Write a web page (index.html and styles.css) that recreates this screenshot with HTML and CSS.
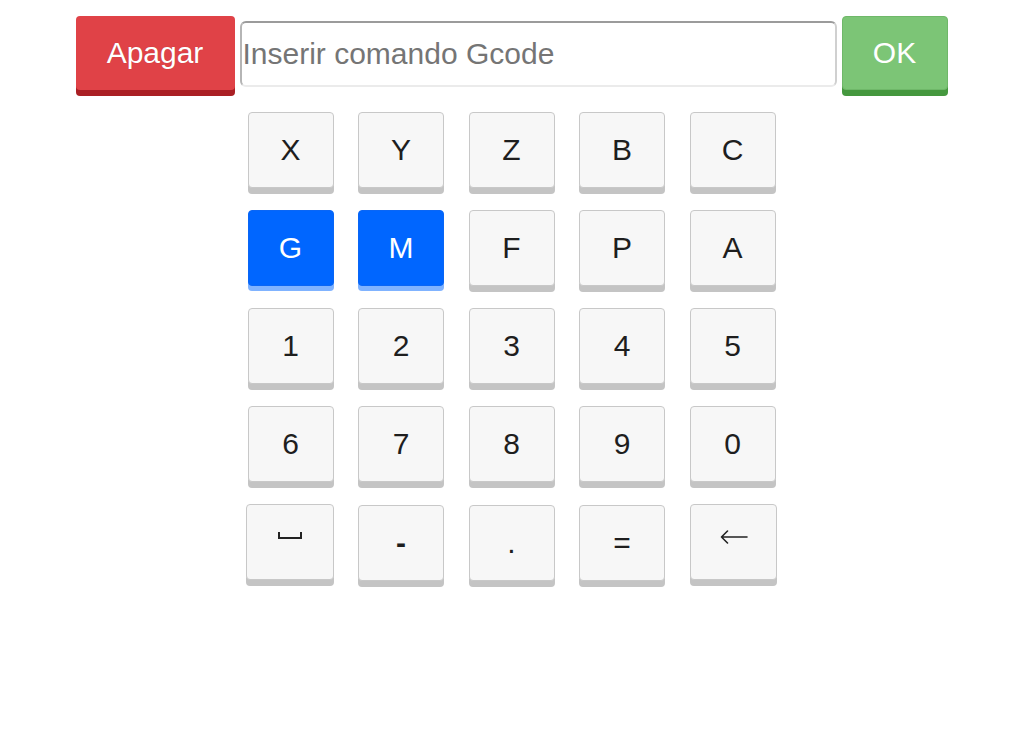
FILE: index.html
```html
<!DOCTYPE html>
<html lang="pt">
<head>
<meta charset="utf-8">
<title>Gcode</title>
<link rel="stylesheet" href="styles.css">
</head>
<body>
<div class="page">
  <div class="top">
    <button class="btn btn-clear">Apagar</button>
    <input class="cmd" type="text" placeholder="Inserir comando Gcode">
    <button class="btn btn-ok">OK</button>
  </div>
  <div class="keys">
    <button class="key">X</button>
    <button class="key">Y</button>
    <button class="key">Z</button>
    <button class="key">B</button>
    <button class="key">C</button>
    <button class="key active">G</button>
    <button class="key active">M</button>
    <button class="key">F</button>
    <button class="key">P</button>
    <button class="key">A</button>
    <button class="key">1</button>
    <button class="key">2</button>
    <button class="key">3</button>
    <button class="key">4</button>
    <button class="key">5</button>
    <button class="key">6</button>
    <button class="key">7</button>
    <button class="key">8</button>
    <button class="key">9</button>
    <button class="key">0</button>
    <button class="key sym space" aria-label="espaço"><span class="spacebox"></span></button>
    <button class="key low dash">-</button>
    <button class="key low">.</button>
    <button class="key low">=</button>
    <button class="key sym back" aria-label="apagar caractere">
      <svg width="28" height="14" viewBox="0 0 28 14" aria-hidden="true">
        <path d="M1.5 7 H27 M7.5 1 L1.5 7 L7.5 13" fill="none" stroke="#222" stroke-width="1.6" stroke-linecap="round" stroke-linejoin="round"/>
      </svg>
    </button>
  </div>
</div>
</body>
</html>
```

FILE: styles.css
```css
html, body {
  margin: 0;
  padding: 0;
  background: #ffffff;
}
body {
  font-family: "Liberation Sans", Arial, sans-serif;
}
.page {
  padding: 16px 0 40px;
}
.top {
  display: flex;
  justify-content: center;
  align-items: flex-start;
  gap: 5px;
}
.btn {
  font-family: "Liberation Sans", Arial, sans-serif;
  font-size: 30px;
  color: #ffffff;
  border: none;
  border-radius: 4px;
  height: 74px;
  padding: 0;
  margin: 0;
}
.btn-clear {
  width: 159px;
  background: #e04247;
  box-shadow: 0 6px 0 #aa1f24;
  text-shadow: 0 0 1px rgba(0,0,0,0.2);
}
.btn-ok {
  width: 106px;
  background: #7cc576;
  box-shadow: 0 6px 0 #45983e;
  border: 1px solid #6fb869;
}
.cmd {
  width: 597px;
  height: 66px;
  box-sizing: border-box;
  margin: 5px 0 0 0;
  padding: 0 1px;
  font-family: "Liberation Sans", Arial, sans-serif;
  font-size: 30px;
  color: #333;
  border: 2px solid;
  border-color: #9b9b9b #d0d0d0 #ebebeb #b5b5b5;
  border-radius: 6px;
  outline: none;
  background: #fff;
}
.cmd::placeholder {
  color: #757575;
}
.keys {
  margin: 22px auto 0;
  width: 528px;
  display: grid;
  grid-template-columns: repeat(5, 86px);
  column-gap: 24.5px;
  row-gap: 22px;
}
.key {
  font-family: "Liberation Sans", Arial, sans-serif;
  font-size: 30px;
  color: #1e1e1e;
  height: 76px;
  width: 86px;
  padding: 0;
  margin: 0;
  background: #f7f7f7;
  border: 1px solid #c8c8c8;
  border-radius: 4px;
  box-shadow: 0 6px 0 #c4c4c4;
  line-height: 1;
}
.key.active {
  background: #0066ff;
  border-color: #0a66f5;
  color: #ffffff;
  box-shadow: 0 5px 0 #80b3ff;
}
.key.low {
  margin-top: 1px;
}
.key.dash {
  font-weight: bold;
}
.key.sym {
  display: flex;
  justify-content: center;
  align-items: flex-start;
}
.key.space {
  width: 88px;
  margin-left: -2px;
  padding-top: 27px;
}
.spacebox {
  display: block;
  width: 20px;
  height: 5px;
  border: 2px solid #222;
  border-top: none;
}
.key.back {
  width: 87px;
  padding-top: 25px;
  padding-left: 2px;
}
.key.back svg {
  display: block;
}
```
